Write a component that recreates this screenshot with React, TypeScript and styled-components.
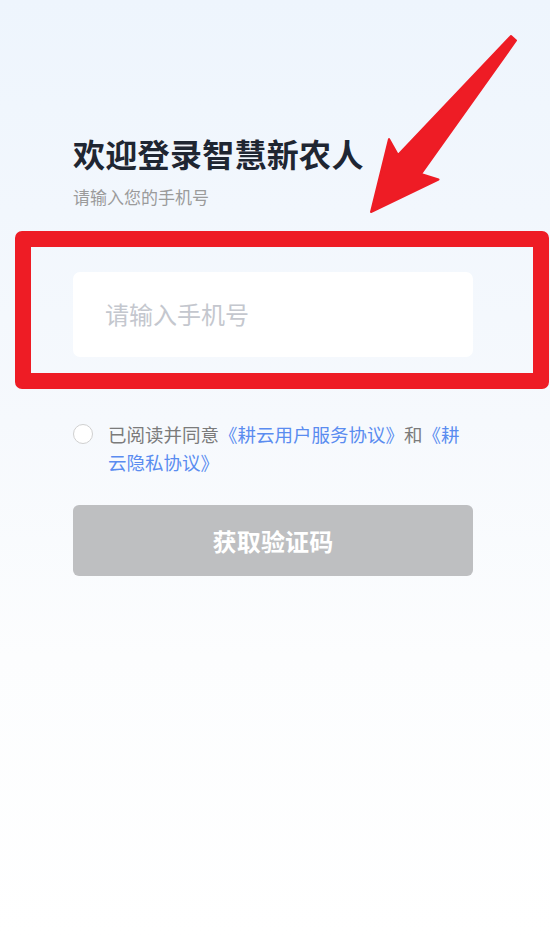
import React from "react";
import styled, { createGlobalStyle } from "styled-components";

const GlobalStyle = createGlobalStyle`
  html, body { margin: 0; padding: 0; }
  body {
    font-family: "Noto Sans CJK SC", "Noto Sans", sans-serif;
    -webkit-font-smoothing: antialiased;
  }
  * { box-sizing: border-box; }
`;

const Page = styled.div`
  position: relative;
  width: 550px;
  min-height: 938px;
  overflow: hidden;
  background: linear-gradient(180deg, #eef5fd 0%, #f6f9fd 45%, #fcfdfe 70%, #ffffff 100%);
`;

const Content = styled.main`
  display: flex;
  flex-direction: column;
  padding: 132px 77px 0 73px;
`;

const Title = styled.h1`
  margin: 0;
  font-size: 32px;
  line-height: 42px;
  font-weight: 700;
  color: #1f2632;
  letter-spacing: 0.3px;
`;

const Subtitle = styled.p`
  margin: 11px 0 0;
  font-size: 17px;
  line-height: 24px;
  color: #9b9b9b;
`;

const PhoneInput = styled.input`
  margin-top: 63px;
  width: 400px;
  height: 85px;
  border: none;
  outline: none;
  border-radius: 7px;
  background: #ffffff;
  padding: 0 0 2px 32px;
  font-family: inherit;
  font-size: 24px;
  color: #333;
  &::placeholder {
    color: #c4c7ce;
  }
`;

const Agreement = styled.div`
  margin-top: 63px;
  display: flex;
  align-items: flex-start;
  gap: 15px;
`;

const Radio = styled.span`
  flex: none;
  width: 20px;
  height: 20px;
  margin-top: 4px;
  border: 1.5px solid #d0d0d0;
  border-radius: 50%;
  background: #ffffff;
`;

const AgreeText = styled.p`
  margin: 0;
  width: 365px;
  font-size: 18.5px;
  line-height: 28px;
  color: #7b7b7b;
`;

const Link = styled.span`
  color: #5a8cf0;
`;

const SubmitButton = styled.button`
  margin-top: 29px;
  width: 400px;
  height: 71px;
  border: none;
  border-radius: 6px;
  background: #bebfc1;
  color: #ffffff;
  font-family: inherit;
  font-size: 24px;
  font-weight: 700;
  letter-spacing: 0.2px;
  padding: 0;
`;

const Highlight = styled.div`
  position: absolute;
  left: 15px;
  top: 231px;
  width: 534px;
  height: 158px;
  border: 16px solid #ee1c25;
  border-radius: 7px;
  pointer-events: none;
`;

const ArrowSvg = styled.svg`
  position: absolute;
  left: 0;
  top: 0;
  pointer-events: none;
`;

export default function App() {
  return (
    <>
      <GlobalStyle />
      <Page>
        <Content>
          <Title>欢迎登录智慧新农人</Title>
          <Subtitle>请输入您的手机号</Subtitle>
          <PhoneInput placeholder="请输入手机号" />
          <Agreement>
            <Radio />
            <AgreeText>
              已阅读并同意<Link>《耕云用户服务协议》</Link>和<Link>《耕云隐私协议》</Link>
            </AgreeText>
          </Agreement>
          <SubmitButton>获取验证码</SubmitButton>
        </Content>
        <Highlight />
        <ArrowSvg width="550" height="240" viewBox="0 0 550 240">
          <polygon
            points="511,36 398,155 389,139 371,212 438.5,179.5 421,174 516,40.5"
            fill="#ee1c25"
            stroke="#ee1c25"
            strokeWidth="2"
            strokeLinejoin="round"
          />
        </ArrowSvg>
      </Page>
    </>
  );
}
